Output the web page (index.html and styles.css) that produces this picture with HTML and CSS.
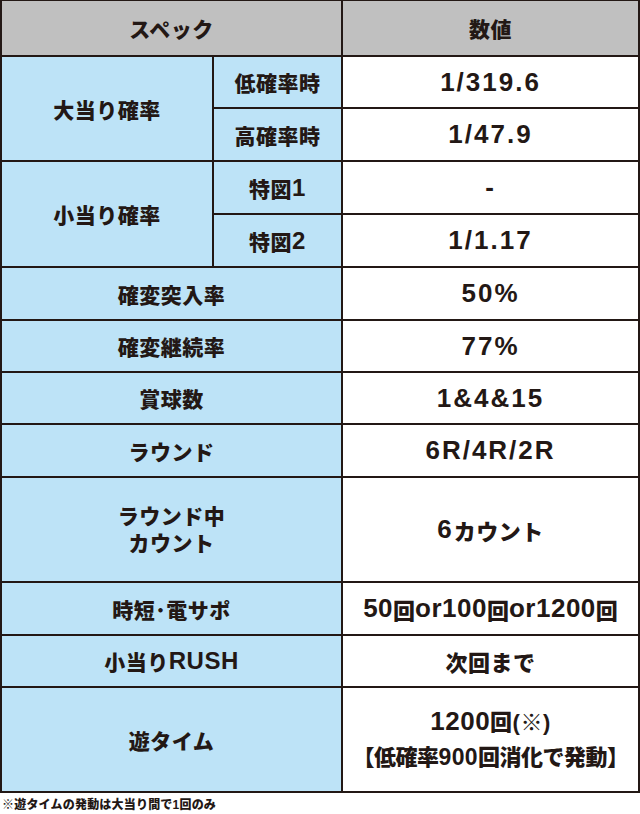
FILE: index.html
```html
<!DOCTYPE html>
<html lang="ja">
<head>
<meta charset="utf-8">
<title>スペック</title>
<link rel="stylesheet" href="styles.css">
</head>
<body>
<div class="spec">
  <div class="cell head span-label">スペック</div>
  <div class="cell head">数値</div>

  <div class="cell label r2">大当り確率</div>
  <div class="cell label sub">低確率時</div>
  <div class="cell value">1/319.6</div>
  <div class="cell label sub">高確率時</div>
  <div class="cell value">1/47.9</div>

  <div class="cell label r2">小当り確率</div>
  <div class="cell label sub">特図<span class="num">1</span></div>
  <div class="cell value">-</div>
  <div class="cell label sub">特図<span class="num">2</span></div>
  <div class="cell value">1/1.17</div>

  <div class="cell label span-label">確変突入率</div>
  <div class="cell value">50%</div>

  <div class="cell label span-label">確変継続率</div>
  <div class="cell value">77%</div>

  <div class="cell label span-label">賞球数</div>
  <div class="cell value">1&amp;4&amp;15</div>

  <div class="cell label span-label">ラウンド</div>
  <div class="cell value">6R/4R/2R</div>

  <div class="cell label span-label two">ラウンド中<br>カウント</div>
  <div class="cell value">6<span class="ja">カウント</span></div>

  <div class="cell label span-label">時短･電サポ</div>
  <div class="cell value tight">50<span class="ja">回</span>or100<span class="ja">回</span>or1200<span class="ja">回</span></div>

  <div class="cell label span-label">小当り<span class="num">RUSH</span></div>
  <div class="cell value"><span class="ja">次回まで</span></div>

  <div class="cell label span-label">遊タイム</div>
  <div class="cell value two-wide"><span class="l1">1200<span class="ja">回(※)</span></span><span class="l2">【低確率<span class="n2">900</span>回消化で発動】</span></div>
</div>
<p class="note">※遊タイムの発動は大当り間で1回のみ</p>
</body>
</html>
```

FILE: styles.css
```css
html, body {
  margin: 0;
  padding: 0;
  background: #ffffff;
}

body {
  width: 640px;
  color: #231815;
  font-family: "Liberation Sans", "Noto Sans CJK JP", sans-serif;
  font-weight: 900;
}

.spec {
  display: grid;
  grid-template-columns: 210px 127px 295px;
  grid-template-rows: 54px 50px 51px 51px 51px 51px 50px 50px 51px 103px 51px 50px 103px;
  gap: 2px;
  padding: 1px 2px 2px 2px;
  background: #231815;
}

.cell {
  display: flex;
  align-items: center;
  justify-content: center;
  text-align: center;
  white-space: nowrap;
}

.head {
  background: #c0c0c0;
  font-size: 21px;
  letter-spacing: 0.5px;
}

.label {
  background: #bde3f7;
  font-size: 21px;
  letter-spacing: 0.5px;
}

.num {
  font-size: 24px;
  font-weight: 700;
  letter-spacing: 0.5px;
}

.span-label {
  grid-column: 1 / 3;
}

.r2 {
  grid-row: span 2;
}

.two {
  line-height: 27px;
}

.value {
  background: #ffffff;
  font-size: 26px;
  font-weight: 700;
  letter-spacing: 2px;
}

.ja {
  font-size: 22px;
  font-weight: 900;
  letter-spacing: 0.5px;
}

.tight {
  letter-spacing: 0.5px;
}

.tight .ja {
  letter-spacing: 0;
}

.two-wide {
  flex-direction: column;
  letter-spacing: 0.5px;
}

.l1 {
  display: block;
  line-height: 34px;
}

.l2 {
  display: block;
  font-size: 22px;
  font-weight: 900;
  line-height: 34px;
  letter-spacing: -0.5px;
}

.n2 {
  font-size: 23px;
  font-weight: 700;
  letter-spacing: 0.3px;
}

.note {
  margin: 0;
  padding-left: 2px;
  font-size: 12px;
  line-height: 24px;
  letter-spacing: 0.2px;
}
```
